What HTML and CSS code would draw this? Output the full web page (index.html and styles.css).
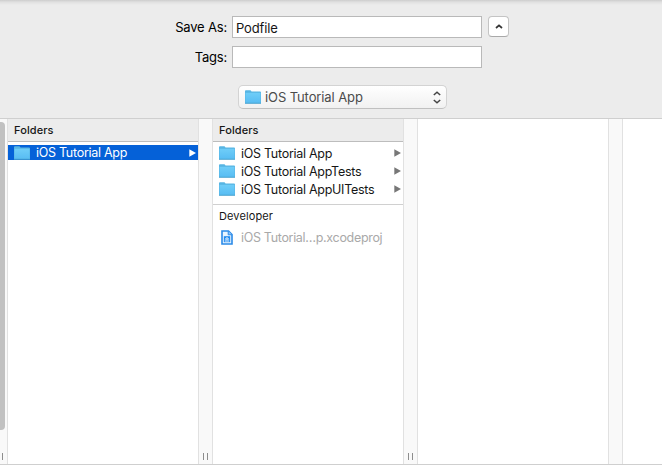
FILE: index.html
```html
<!DOCTYPE html>
<html lang="en">
<head>
<meta charset="utf-8">
<title>Save As</title>
<link rel="stylesheet" href="styles.css">
</head>
<body>
<svg width="0" height="0" class="defs">
  <defs>
    <linearGradient id="blue" x1="0" y1="0" x2="0" y2="1"><stop offset="0" stop-color="#6fcdf8"/><stop offset="1" stop-color="#58bdf3"/></linearGradient>
    <symbol id="folder" viewBox="0 0 16 14">
      <path d="M0 1.2Q0 .3 .9 .3H5.2Q5.9 .3 6.2 1L6.5 1.6H15.1Q16 1.6 16 2.5V13.2H0Z" fill="#57b5e3"/>
      <path d="M0.5 2.8H15.5V12.8H.5Z" fill="url(#blue)"/>
      <path d="M0 13.3H16" stroke="#449fce" stroke-width=".9"/>
    </symbol>
    <symbol id="arrow" viewBox="0 0 7 8"><path d="M.3 .2L7 4L.3 7.8Z" fill="currentColor"/></symbol>
  </defs>
</svg>
<main class="dialog">
  <form class="top">
    <div class="field-row">
      <label class="label save">Save As:</label>
      <div class="input"><span class="podfile">Podfile</span></div>
      <div class="collapse"><svg width="8" height="5" viewBox="0 0 8 5"><path d="M1 4L4 1.3L7 4" fill="none" stroke="#333" stroke-width="1.7"/></svg></div>
    </div>
    <div class="field-row">
      <label class="label tags">Tags:</label>
      <div class="input"></div>
    </div>
    <div class="popup">
      <svg class="folder" width="16" height="14"><use href="#folder"/></svg>
      <span class="name">iOS Tutorial App</span>
      <svg class="updown" width="8" height="13" viewBox="0 0 8 13"><path d="M.8 4L4 1.2L7.2 4M.8 9L4 11.8L7.2 9" fill="none" stroke="#444" stroke-width="1.5"/></svg>
    </div>
  </form>
  <div class="browser">
    <div class="gutter first"><i class="thumb"></i><i class="grip"></i></div>
    <section class="column">
      <h2>Folders</h2>
      <div class="row selected"><svg class="folder" width="16" height="14"><use href="#folder"/></svg><span class="name">iOS Tutorial App</span><svg class="arrow" width="7" height="8"><use href="#arrow"/></svg></div>
    </section>
    <div class="gutter"><i class="grip"></i><i class="grip"></i></div>
    <section class="column">
      <h2>Folders</h2>
      <div class="list">
        <div class="row"><svg class="folder" width="16" height="14"><use href="#folder"/></svg><span class="name">iOS Tutorial App</span><svg class="arrow" width="7" height="8"><use href="#arrow"/></svg></div>
        <div class="row"><svg class="folder" width="16" height="14"><use href="#folder"/></svg><span class="name tests">iOS Tutorial AppTests</span><svg class="arrow" width="7" height="8"><use href="#arrow"/></svg></div>
        <div class="row"><svg class="folder" width="16" height="14"><use href="#folder"/></svg><span class="name uitests">iOS Tutorial AppUITests</span><svg class="arrow" width="7" height="8"><use href="#arrow"/></svg></div>
      </div>
      <h3>Developer</h3>
      <div class="row disabled">
        <svg class="file" width="12" height="15" viewBox="0 0 12 15"><path d="M1 1H7.5L11 4.5V14H1Z" fill="#e9f5ff" stroke="#2b8ae8" stroke-width="1.6"/><path d="M7.2 1V4.8H11" fill="#8fc5f7" stroke="#2b8ae8"/><path d="M2.8 6.2H9.2V12.2H2.8Z" fill="#218bf0"/><path d="M3.8 11H8.2M4.4 9.2L6 7.4L7.6 9.2Z" fill="none" stroke="#fff" stroke-width=".9"/></svg>
        <span class="name project">iOS Tutorial…p.xcodeproj</span>
      </div>
    </section>
    <div class="gutter"><i class="grip"></i><i class="grip"></i></div>
    <section class="column"></section>
    <div class="gutter"></div>
    <section class="column last"></section>
  </div>
</main>
</body>
</html>
```
FILE: styles.css
```css
* { box-sizing: border-box; }
body { margin: 0; font: 13px/18px Inter, "Liberation Sans", sans-serif; color: #161616; overflow: hidden; }
.defs { position: absolute; }
.dialog { width: 662px; height: 465px; display: flex; flex-direction: column; background: #ececec; }
.top { height: 119px; padding-top: 16px; border-bottom: 1px solid #cfcfcf; background: linear-gradient(#cdcdcd, #e0e0e0 2px, #ececec 5px); }
.field-row { display: flex; height: 22px; margin-bottom: 8px; }
.label { width: 227px; margin-right: 5px; text-align: right; line-height: 22px; color: #000; }
.save { letter-spacing: -.18px; }
.tags { letter-spacing: -.2px; }
.input { width: 250px; height: 22px; padding-left: 3px; border: 1px solid #b9b9b9; background: #fff; line-height: 23px; }
.podfile { letter-spacing: -.14px; }
.collapse { width: 21px; height: 21px; margin-left: 6px; border: 1px solid #c4c4c4; border-bottom-color: #a9a9a9; border-radius: 4px; background: #fff; display: flex; align-items: center; justify-content: center; }
.popup { display: flex; align-items: center; width: 209px; height: 24px; margin: 17px 0 0 238px; padding: 0 5px 0 6px; border: 1px solid #d3d3d3; border-bottom-color: #c0c0c0; border-radius: 5px; background: linear-gradient(#fff, #f1f1f1); color: #4b4b4b; }
.popup .name { margin-left: 4px; letter-spacing: -.1px; }
.updown { margin-left: auto; }
.browser { height: 346px; display: flex; border-bottom: 1px solid #cfcfcf; background: #fff; }
.gutter { flex: none; width: 15px; display: flex; justify-content: center; align-items: flex-end; gap: 3px; padding-bottom: 4px; border: solid #e1e1e1; border-width: 0 1px; background: #f9f9f9; }
.grip { width: 1px; height: 7px; background: #8d8d8d; }
.first { width: 8px; border-left: 0; flex-direction: column; align-items: flex-start; justify-content: space-between; gap: 0; padding-top: 3px; }
.thumb { width: 5px; height: 308px; border-radius: 0 4px 4px 0; background: #c1c1c1; }
.first .grip { margin-left: 2px; }
.column { flex: none; width: 190px; }
.column.last { width: 39px; }
h2 { margin: 0 0 3px; height: 23px; padding-left: 6px; border-bottom: 1px solid #bdbdbd; background: #ececec; font-size: 11px; font-weight: 500; line-height: 23px; letter-spacing: .1px; }
.row { display: flex; align-items: center; height: 18px; padding: 0 2px 0 6px; white-space: nowrap; }
.row .name { margin-left: 6px; font-size: 12.5px; letter-spacing: -.28px; }
.list .name, .disabled .name { padding-top: 2px; }
.arrow { margin-left: auto; color: #777; }
.selected { height: 15px; background: #0561d8; color: #fff; }
.selected .arrow { color: #fff; }
.list { height: 61px; margin-top: -1px; border-bottom: 1px solid #d0d0d0; }
.list .row { height: 18px; }
h3 { margin: 0; padding: 2px 0 0 6px; height: 23px; font-size: 11px; line-height: 19px; font-weight: 400; letter-spacing: .1px; }
.disabled { color: #a9a9a9; padding-left: 8px; }
.disabled .name { margin-left: 8px; letter-spacing: -.32px; }
```
